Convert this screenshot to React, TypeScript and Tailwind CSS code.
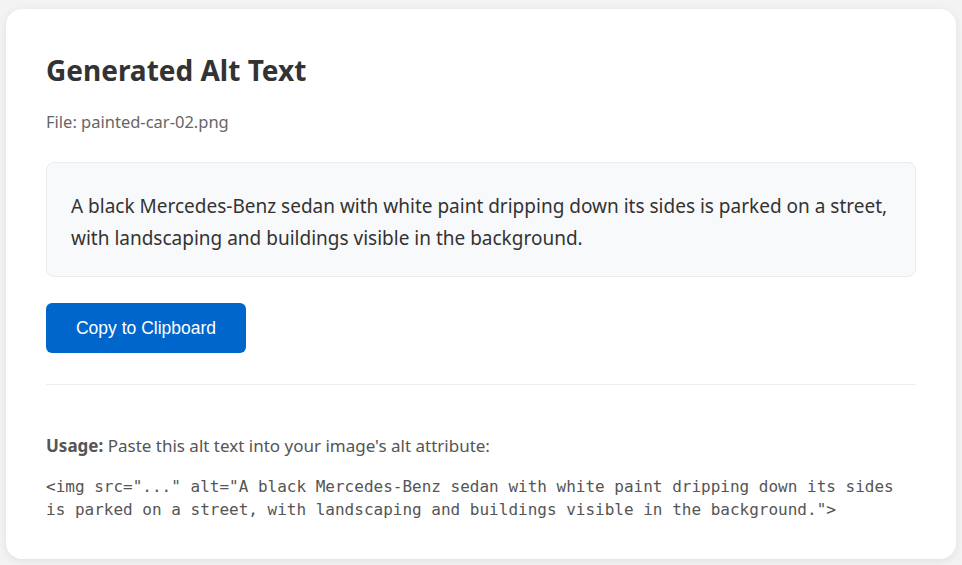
export default function App() {
  const alt =
    "A black Mercedes-Benz sedan with white paint dripping down its sides is parked on a street, with landscaping and buildings visible in the background.";

  return (
    <div className="min-h-screen bg-[#f3f3f3] px-[6px] pt-[9px] pb-[6px] font-['Noto_Sans',sans-serif] text-[#333]">
      <div className="rounded-2xl bg-white px-10 pt-[43px] pb-[38px] shadow-[0_2px_10px_rgba(0,0,0,0.08)]">
        <h1 className="text-[28px] leading-[1.3] font-bold text-[#333]">Generated Alt Text</h1>
        <p className="mt-[22px] text-[16.5px] text-[#666]">File: painted-car-02.png</p>

        <div className="mt-[27px] rounded-lg border border-[#e9ecef] bg-[#f8f9fa] px-6 pt-[27px] pb-[22px]">
          <p className="text-[19px] leading-[32px] text-[#333]">{alt}</p>
        </div>

        <button className="mt-[26px] flex h-[50px] w-[200px] items-center justify-center rounded-md bg-[#0066cc] font-['Liberation_Sans',Arial,sans-serif] text-[17.5px] text-white">
          Copy to Clipboard
        </button>

        <div className="mt-[31px] border-t border-[#eee] pt-[48px]">
          <p className="text-[17px] text-[#555]">
            <strong>Usage:</strong> Paste this alt text into your image's alt attribute:
          </p>
          <pre className="mt-[16px] font-['DejaVu_Sans_Mono',monospace] text-base leading-[1.45] whitespace-pre-wrap text-[#555]">
            {`<img src="..." alt="${alt}">`}
          </pre>
        </div>
      </div>
    </div>
  );
}
